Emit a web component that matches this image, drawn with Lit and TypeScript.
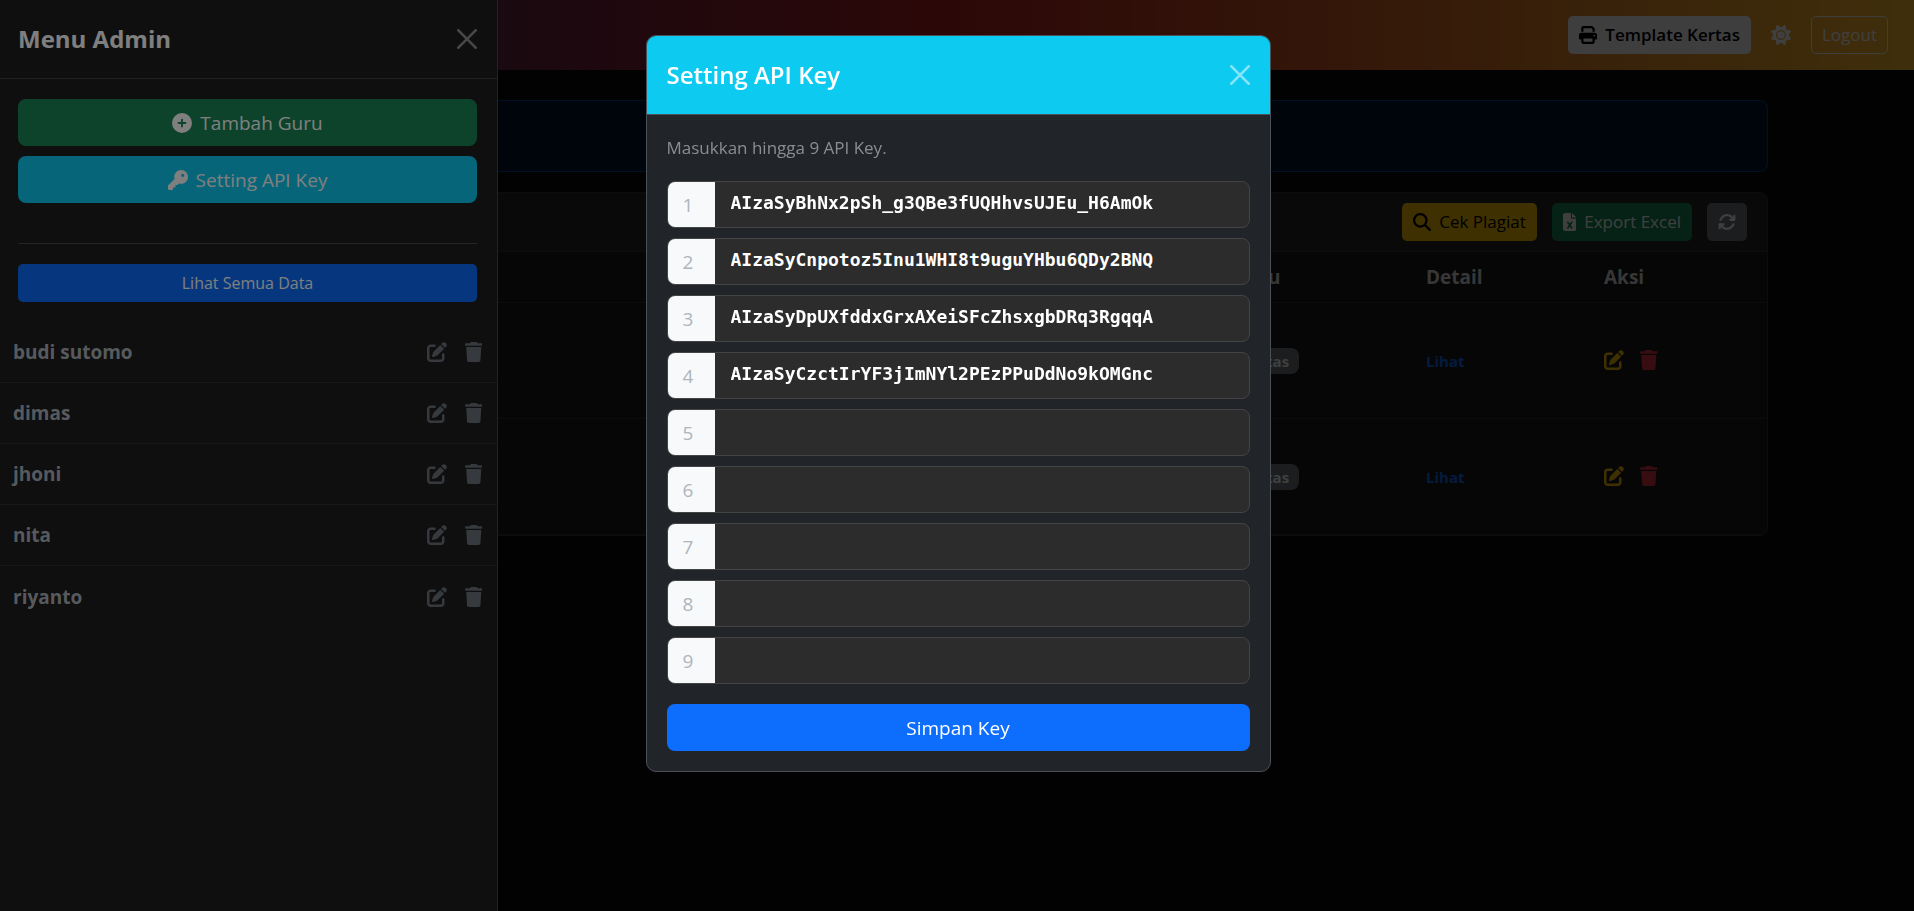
import { LitElement, html, css, svg } from "lit";
import { customElement, state } from "lit/decorators.js";

const icon = (w: number, d: string) => html`
  <svg class="icon" viewBox="0 0 ${w} 512" aria-hidden="true">${svg`<path d=${d} />`}</svg>
`;

const PLUS = "M256 512a256 256 0 1 0 0-512 256 256 0 1 0 0 512zM232 344l0-64-64 0c-13.300 0-24-10.700-24-24s10.700-24 24-24l64 0 0-64c0-13.300 10.700-24 24-24s24 10.700 24 24l0 64 64 0c13.300 0 24 10.700 24 24s-10.700 24-24 24l-64 0 0 64c0 13.300-10.700 24-24 24s-24-10.700-24-24z";
const KEY = "M336 352c97.200 0 176-78.800 176-176S433.200 0 336 0 160 78.800 160 176c0 18.700 2.900 36.800 8.300 53.700L7 391c-4.500 4.500-7 10.600-7 17l0 80c0 13.300 10.700 24 24 24l80 0c13.300 0 24-10.700 24-24l0-40 40 0c13.300 0 24-10.700 24-24l0-40 40 0c6.400 0 12.500-2.500 17-7l33.300-33.300c16.900 5.400 35 8.300 53.700 8.300zM376 96a40 40 0 1 1 0 80 40 40 0 1 1 0-80z";
const EDIT = "M471.600 21.700c-21.900-21.900-57.300-21.900-79.200 0L362.300 51.700l97.900 97.900 30.100-30.100c21.900-21.900 21.900-57.300 0-79.200L471.600 21.700zm-299.200 220c-6.100 6.100-10.800 13.600-13.500 21.900l-29.600 88.800c-2.900 8.600-.6 18.100 5.800 24.600s15.900 8.700 24.600 5.800l88.800-29.600c8.200-2.700 15.700-7.400 21.900-13.500L437.700 172.300 339.700 74.300 172.400 241.700zM96 64C43 64 0 107 0 160L0 416c0 53 43 96 96 96l256 0c53 0 96-43 96-96l0-96c0-17.700-14.300-32-32-32s-32 14.300-32 32l0 96c0 17.700-14.300 32-32 32L96 448c-17.700 0-32-14.300-32-32l0-256c0-17.700 14.300-32 32-32l96 0c17.700 0 32-14.300 32-32s-14.300-32-32-32L96 64z";
const TRASH = "M135.200 17.700L128 32 32 32C14.300 32 0 46.300 0 64S14.300 96 32 96l384 0c17.700 0 32-14.300 32-32s-14.300-32-32-32l-96 0-7.200-14.300C307.400 6.800 296.300 0 284.200 0L163.800 0c-12.100 0-23.200 6.800-28.600 17.700zM416 128L32 128 53.200 467c1.600 25.300 22.600 45 47.900 45l245.800 0c25.300 0 46.300-19.700 47.900-45L416 128z";
const PRINT = "M128 0C92.700 0 64 28.700 64 64l0 96 64 0 0-96 226.700 0L384 93.300l0 66.700 64 0 0-66.700c0-17-6.700-33.300-18.700-45.300L400 18.700C388 6.700 371.700 0 354.700 0L128 0zM384 352l0 32 0 64-256 0 0-64 0-16 0-16 256 0zm64 32l32 0c17.700 0 32-14.300 32-32l0-96c0-35.300-28.700-64-64-64L64 192c-35.300 0-64 28.700-64 64l0 96c0 17.700 14.300 32 32 32l32 0 0 64c0 35.300 28.700 64 64 64l256 0c35.300 0 64-28.700 64-64l0-64zM432 248a24 24 0 1 1 0 48 24 24 0 1 1 0-48z";
const SUN = "M361.500 1.200c5 2.100 8.600 6.600 9.600 11.900L391 121l107.900 19.800c5.300 1 9.800 4.600 11.900 9.600s1.500 10.700-1.600 15.200L446.900 256l62.300 90.300c3.100 4.500 3.700 10.200 1.600 15.200s-6.600 8.600-11.900 9.600L391 391 371.100 498.900c-1 5.300-4.600 9.800-9.600 11.900s-10.700 1.500-15.200-1.600L256 446.900l-90.300 62.300c-4.500 3.100-10.200 3.700-15.200 1.600s-8.600-6.600-9.600-11.900L121 391 13.100 371.100c-5.300-1-9.800-4.600-11.900-9.600s-1.500-10.700 1.600-15.200L65.100 256 2.800 165.700c-3.100-4.500-3.700-10.200-1.600-15.200s6.600-8.600 11.900-9.600L121 121 140.900 13.100c1-5.300 4.600-9.800 9.600-11.900s10.700-1.500 15.200 1.600L256 65.100 346.300 2.800c4.500-3.100 10.200-3.700 15.200-1.600zM160 256a96 96 0 1 1 192 0 96 96 0 1 1 -192 0zm224 0a128 128 0 1 0 -256 0 128 128 0 1 0 256 0z";
const SEARCH = "M416 208c0 45.900-14.900 88.300-40 122.700L502.600 457.400c12.500 12.500 12.500 32.800 0 45.300s-32.800 12.500-45.300 0L330.700 376c-34.400 25.200-76.800 40-122.700 40C93.100 416 0 322.900 0 208S93.100 0 208 0S416 93.100 416 208zM208 352a144 144 0 1 0 0-288 144 144 0 1 0 0 288z";
const EXCEL = "M64 0C28.700 0 0 28.700 0 64L0 448c0 35.300 28.700 64 64 64l256 0c35.300 0 64-28.700 64-64l0-288-128 0c-17.700 0-32-14.300-32-32L224 0 64 0zM256 0l0 128 128 0L256 0zM155.700 250.200L192 302.100l36.300-51.900c7.600-10.900 22.600-13.500 33.400-5.900s13.500 22.600 5.900 33.400L221.300 344l46.400 66.200c7.600 10.900 5 25.800-5.900 33.400s-25.800 5-33.400-5.900L192 385.800l-36.300 51.900c-7.600 10.900-22.600 13.500-33.400 5.900s-13.500-22.600-5.900-33.400L162.700 344l-46.400-66.200c-7.600-10.900-5-25.800 5.900-33.400s25.800-5 33.400 5.900z";
const SYNC = "M105.100 202.600c7.700-21.800 20.200-42.300 37.800-59.800c62.500-62.500 163.800-62.500 226.300 0L386.300 160 352 160c-17.700 0-32 14.300-32 32s14.300 32 32 32l111.500 0c17.700 0 32-14.300 32-32l0-112c0-17.700-14.300-32-32-32s-32 14.300-32 32l0 35.200L414.400 97.600c-87.500-87.500-229.300-87.500-316.800 0C73.200 122 55.600 150.700 44.800 181.400c-5.900 16.700 2.900 34.900 19.500 40.800s34.900-2.900 40.800-19.500zM39 289.300c-5 1.500-9.800 4.200-13.700 8.200c-4 4-6.700 8.800-8.100 14c-.3 1.200-.6 2.500-.8 3.800c-.3 1.700-.4 3.400-.4 5.100L16 432c0 17.700 14.300 32 32 32s32-14.300 32-32l0-35.100 17.600 17.500c87.500 87.400 229.300 87.400 316.700 0c24.400-24.400 42.100-53.100 52.900-83.700c5.900-16.700-2.900-34.900-19.500-40.800s-34.900 2.900-40.800 19.500c-7.700 21.800-20.200 42.300-37.800 59.800c-62.500 62.500-163.800 62.500-226.300 0l-.1-.1L125.600 352l34.400 0c17.700 0 32-14.300 32-32s-14.300-32-32-32L48.400 288c-1.600 0-3.200 .1-4.800 .3s-3.100 .5-4.600 1z";

const closeIcon = html`<svg class="close-icon" viewBox="0 0 16 16" aria-hidden="true">
  <path d="M.293.293a1 1 0 0 1 1.414 0L8 6.586 14.293.293a1 1 0 1 1 1.414 1.414L9.414 8l6.293 6.293a1 1 0 0 1-1.414 1.414L8 9.414l-6.293 6.293a1 1 0 0 1-1.414-1.414L6.586 8 .293 1.707a1 1 0 0 1 0-1.414z" />
</svg>`;

const shared = css`
  :host {
    display: block;
    font-family: "Open Sans", "Noto Sans", sans-serif;
    font-size: 19px;
    line-height: 30px;
    color: #fff;
  }
  *,
  *::before,
  *::after {
    box-sizing: border-box;
  }
  h1,
  h2,
  p,
  ul {
    margin: 0;
    padding: 0;
  }
  ul {
    list-style: none;
  }
  button {
    font: inherit;
    color: inherit;
    margin: 0;
    cursor: pointer;
  }
  .icon {
    display: block;
    height: 20px;
    fill: currentColor;
  }
  .btn {
    display: flex;
    align-items: center;
    justify-content: center;
    gap: 8px;
    min-height: 47px;
    padding: 0 15px;
    border: 1px solid transparent;
    border-radius: 8px;
  }
  .btn.small {
    min-height: 38px;
    padding: 0 10px;
    border-radius: 5px;
    font-size: 17px;
  }
  .btn.small .icon {
    height: 18px;
  }
  .block {
    width: 100%;
  }
  .close,
  .plain {
    display: flex;
    padding: 0;
    border: 0;
    background: none;
  }
  .close-icon {
    width: 20px;
    height: 20px;
    fill: #fff;
    opacity: 0.5;
  }
  .primary {
    background: #0d6efd;
  }
`;

@customElement("admin-page")
class AdminPage extends LitElement {
  static styles = [
    shared,
    css`
      .navbar {
        display: flex;
        justify-content: flex-end;
        align-items: center;
        gap: 20px;
        height: 70px;
        padding: 0 26px;
        background: linear-gradient(90deg, #1a2a6c, #b21f1f, #fdbb2d);
      }
      .btn.light {
        background: #f8f9fa;
        color: #000;
        font-weight: 600;
      }
      .btn.outline {
        background: none;
        border-color: #f8f9fa;
      }
      .container {
        max-width: 1652px;
        margin: 0 auto;
        padding: 30px 15px 30px 17px;
        display: grid;
        gap: 20px;
      }
      .notice {
        height: 72px;
        border: 1px solid #084298;
        border-radius: 8px;
        background: #031633;
      }
      .card {
        border: 1px solid #303030;
        border-radius: 8px;
        background: #1b1b1b;
        overflow: hidden;
      }
      .card-head {
        display: flex;
        justify-content: flex-end;
        gap: 15px;
        padding: 10px 20px;
        border-bottom: 1px solid #303030;
        background: #242424;
      }
      .warning {
        background: #ffc107;
        color: #000;
      }
      .success {
        background: #198754;
      }
      .secondary {
        background: #6c757d;
      }
      table {
        width: 100%;
        border-collapse: collapse;
        table-layout: fixed;
      }
      .col-detail {
        width: 178px;
      }
      .col-status {
        width: 208px;
      }
      .col-action {
        width: 173px;
      }
      th,
      td {
        padding: 0 10px;
        text-align: left;
        border-bottom: 1px solid #303030;
      }
      th {
        height: 50px;
        color: #dedede;
        font-weight: 700;
      }
      td {
        height: 116px;
      }
      .badge {
        display: inline-block;
        padding: 0 10px;
        border-radius: 8px;
        background: #6c757d;
        font-size: 15px;
        font-weight: 700;
        line-height: 26px;
      }
      a {
        color: #0d6efd;
        font-size: 15px;
        font-weight: 700;
        text-decoration: none;
      }
      .actions {
        display: flex;
        gap: 16px;
      }
      .edit {
        color: #ffc107;
      }
      .delete {
        color: #dc3545;
      }
    `,
  ];

  render() {
    const row = html`<tr>
      <td></td>
      <td><span class="badge">5 Kertas</span></td>
      <td><a href="#detail">Lihat</a></td>
      <td>
        <div class="actions">
          <button class="plain edit" aria-label="Edit">${icon(512, EDIT)}</button>
          <button class="plain delete" aria-label="Hapus">${icon(448, TRASH)}</button>
        </div>
      </td>
    </tr>`;
    return html`
      <header class="navbar">
        <button class="btn small light">${icon(512, PRINT)}Template Kertas</button>
        <button class="plain" aria-label="Tema">${icon(512, SUN)}</button>
        <button class="btn small outline">Logout</button>
      </header>
      <main class="container">
        <section class="notice"></section>
        <section class="card">
          <div class="card-head">
            <button class="btn small warning">${icon(512, SEARCH)}Cek Plagiat</button>
            <button class="btn small success">${icon(384, EXCEL)}Export Excel</button>
            <button class="btn small secondary" aria-label="Muat ulang">${icon(512, SYNC)}</button>
          </div>
          <table>
            <colgroup>
              <col />
              <col class="col-status" />
              <col class="col-detail" />
              <col class="col-action" />
            </colgroup>
            <thead>
              <tr>
                <th></th>
                <th>Waktu</th>
                <th>Detail</th>
                <th>Aksi</th>
              </tr>
            </thead>
            <tbody>
              ${row}${row}
            </tbody>
          </table>
        </section>
      </main>
    `;
  }
}

@customElement("admin-menu")
class AdminMenu extends LitElement {
  static styles = [
    shared,
    css`
      :host {
        height: 100%;
        background: #1e1e1e;
        border-right: 1px solid #444;
      }
      .head {
        display: flex;
        justify-content: space-between;
        align-items: center;
        height: 79px;
        padding: 0 20px 0 18px;
        border-bottom: 1px solid #444;
      }
      h1 {
        font-size: 24px;
        font-weight: 700;
      }
      .tools {
        display: grid;
        gap: 10px;
        padding: 20px 20px 20px 18px;
      }
      .tools .small {
        font-size: 16px;
      }
      .success {
        background: #198754;
      }
      .info {
        background: #0dcaf0;
      }
      hr {
        width: 100%;
        margin: 30px 0 10px;
        border: 0;
        border-top: 1px solid #494949;
      }
      li {
        display: flex;
        align-items: center;
        gap: 18px;
        height: 61px;
        padding: 0 15px 0 13px;
        border-bottom: 1px solid #303030;
        color: #6c757d;
      }
      li:last-child {
        border-bottom: 0;
      }
      .name {
        flex: 1;
        color: #adb5bd;
        font-weight: 700;
      }
    `,
  ];

  render() {
    const names = ["budi sutomo", "dimas", "jhoni", "nita", "riyanto"];
    return html`
      <div class="head">
        <h1>Menu Admin</h1>
        <button class="close" aria-label="Tutup menu">${closeIcon}</button>
      </div>
      <div class="tools">
        <button class="btn block success">${icon(512, PLUS)}Tambah Guru</button>
        <button class="btn block info">${icon(512, KEY)}Setting API Key</button>
        <hr />
        <button class="btn small block primary">Lihat Semua Data</button>
      </div>
      <ul>
        ${names.map(
          (n) => html`<li>
            <span class="name">${n}</span>
            <button class="plain" aria-label="Edit ${n}">${icon(512, EDIT)}</button>
            <button class="plain" aria-label="Hapus ${n}">${icon(448, TRASH)}</button>
          </li>`
        )}
      </ul>
    `;
  }
}

@customElement("api-key-dialog")
class ApiKeyDialog extends LitElement {
  static styles = [
    shared,
    css`
      .dialog {
        border: 1px solid #495057;
        border-radius: 10px;
        background: #212529;
        overflow: hidden;
      }
      .head {
        display: flex;
        justify-content: space-between;
        align-items: center;
        height: 79px;
        padding: 0 20px;
        border-bottom: 1px solid #495057;
        background: #0dcaf0;
      }
      h2 {
        font-size: 24px;
        font-weight: 600;
      }
      form {
        padding: 20px;
      }
      .hint {
        margin-bottom: 20px;
        color: #8a8e92;
        font-size: 17px;
        line-height: 26px;
      }
      .keys {
        display: grid;
        gap: 10px;
        margin-bottom: 20px;
      }
      .key {
        display: flex;
        height: 47px;
        border: 1px solid #444;
        border-radius: 8px;
        background: #2c2c2c;
        overflow: hidden;
      }
      label {
        display: flex;
        align-items: center;
        width: 47px;
        padding-left: 15px;
        background: #f8f9fa;
        color: #adb5bd;
      }
      input {
        flex: 1;
        min-width: 0;
        padding: 0 16px 3px;
        border: 0;
        outline: 0;
        background: none;
        color: #fff;
        font: 700 18px/30px "DejaVu Sans Mono", "Liberation Mono", monospace;
      }
    `,
  ];

  @state() keys = [
    "AIzaSyBhNx2pSh_g3QBe3fUQHhvsUJEu_H6AmOk",
    "AIzaSyCnpotoz5Inu1WHI8t9uguYHbu6QDy2BNQ",
    "AIzaSyDpUXfddxGrxAXeiSFcZhsxgbDRq3RgqqA",
    "AIzaSyCzctIrYF3jImNYl2PEzPPuDdNo9kOMGnc",
    "",
    "",
    "",
    "",
    "",
  ];

  render() {
    return html`
      <section class="dialog" role="dialog" aria-labelledby="title">
        <div class="head">
          <h2 id="title">Setting API Key</h2>
          <button class="close" aria-label="Tutup">${closeIcon}</button>
        </div>
        <form>
          <p class="hint">Masukkan hingga 9 API Key.</p>
          <div class="keys">
            ${this.keys.map(
              (k, i) => html`<div class="key">
                <label for="key-${i}">${i + 1}</label>
                <input id="key-${i}" type="text" spellcheck="false" .value=${k} />
              </div>`
            )}
          </div>
          <button type="button" class="btn block primary">Simpan Key</button>
        </form>
      </section>
    `;
  }
}

@customElement("app-root")
class AppRoot extends LitElement {
  static styles = css`
    :host {
      display: block;
      min-height: 100vh;
      background: #0a0a0a;
    }
    .backdrop {
      position: fixed;
      inset: 0;
      background: rgba(0, 0, 0, 0.5);
    }
    .menu {
      position: fixed;
      inset: 0 auto 0 0;
      width: 498px;
      max-width: 100%;
    }
    .modal {
      position: fixed;
      inset: 0;
      overflow: auto;
      padding: 35px 10px 35px 12px;
    }
    .modal api-key-dialog {
      max-width: 625px;
      margin: 0 auto;
    }
  `;

  render() {
    return html`
      <admin-page></admin-page>
      <div class="backdrop"></div>
      <div class="menu"><admin-menu></admin-menu></div>
      <div class="backdrop"></div>
      <div class="modal"><api-key-dialog></api-key-dialog></div>
    `;
  }
}
